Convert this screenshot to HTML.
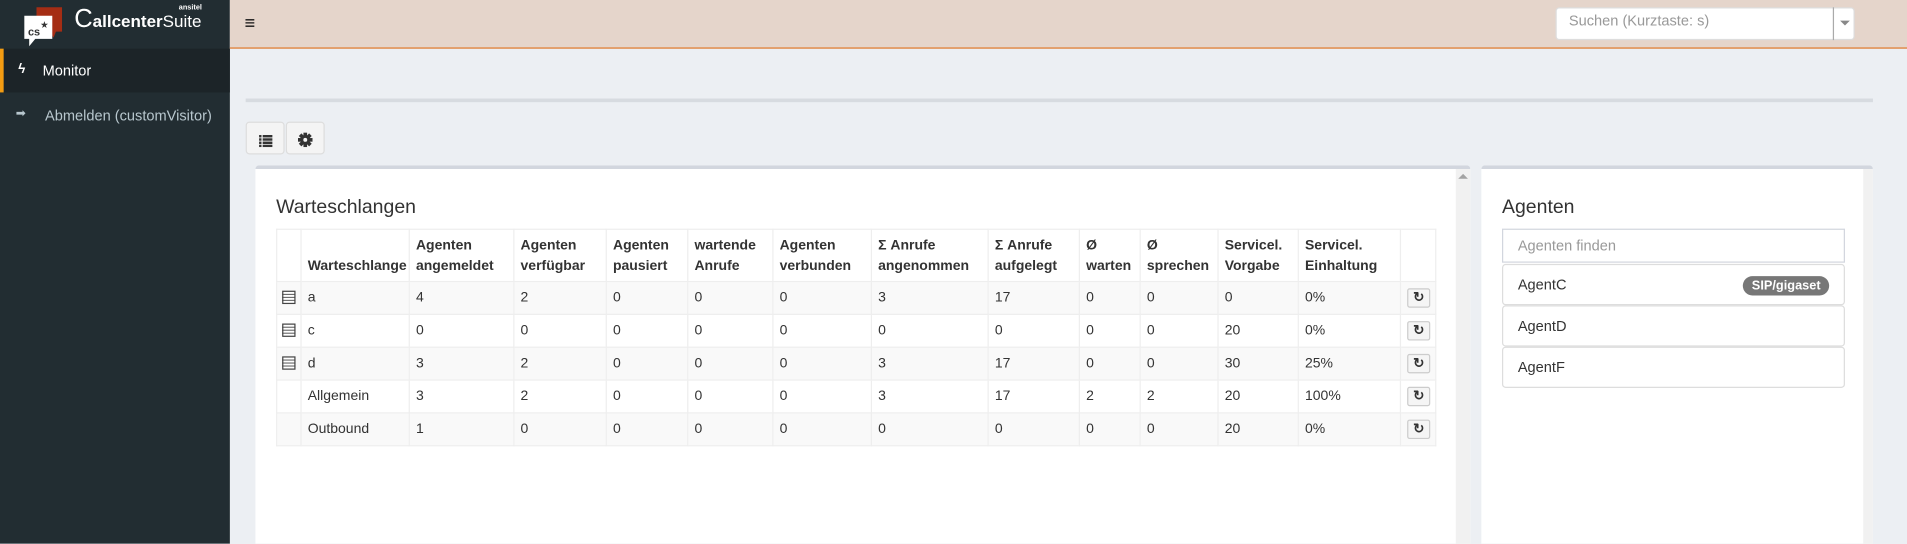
<!DOCTYPE html>
<html><head><meta charset="utf-8">
<style>
*{box-sizing:border-box;margin:0;padding:0}
html,body{width:1907px;height:544px;overflow:hidden;background:#eceff3;font-family:"Liberation Sans",Arial,sans-serif}
#w{position:absolute;left:0;top:0;width:1568px;height:447px;transform:scale(1.2162);transform-origin:0 0;background:#eceff3;color:#333}
.abs{position:absolute}
#side{left:0;top:0;width:189px;height:447px;background:#222d32}
#top{left:189px;top:0;width:1379px;height:40px;background:#e5d5cb;border-bottom:1px solid #e07a2c}
table{border-collapse:collapse;font-size:11.5px;color:#333;table-layout:fixed}
td,th{border:1px solid #eeeeee;padding:0 5px;text-align:left;vertical-align:middle;white-space:nowrap;overflow:hidden}
th{font-weight:bold;line-height:17px;vertical-align:bottom;padding-bottom:3px;height:43px}
td{height:27px}
tr.g td{background:#f9f9f9}
.rb{width:19px;height:16px;border:1px solid #ccc;border-radius:2px;background:#f5f5f5;display:inline-block;vertical-align:middle;text-align:center;font-size:11px;line-height:14px;font-weight:bold}
.qi{display:inline-block;width:11px;height:11px;border:1px solid #444;background:repeating-linear-gradient(#fff 0 1.5px,#555 1.5px 2.5px);vertical-align:middle}
.ag{position:absolute;left:1235px;width:282px;height:34px;border:1px solid #ddd;border-radius:3px;background:#fff;font-size:12px;padding:0 0 0 12px;line-height:33px;color:#333}
</style></head><body><div id="w">
<div id="side" class="abs">
  <svg class="abs" style="left:16px;top:5px" width="40" height="42" viewBox="0 0 40 42">
    <path d="M14 1h21v20l-5 0l-2 5l-3-5h-11z" fill="#a52d14"/>
    <path d="M4 8h23v19h-14l-5 6v-6h-4z" fill="#fff"/>
    <text x="7" y="24" font-size="9" font-family="Liberation Sans" font-weight="bold" fill="#333">cs</text>
    <text x="17" y="18" font-size="8" fill="#333">★</text>
  </svg>
  <div class="abs" style="left:61px;top:5px;color:#fff;white-space:nowrap;line-height:22px"><span style="font-size:21px">C</span><b style="font-size:14px">allcenter</b><span style="font-size:14px">Suite</span></div>
  <div class="abs" style="left:147px;top:4px;font-size:6px;color:#fff;font-weight:bold">ansitel</div>
  <div class="abs" style="left:0;top:40px;width:189px;height:36px;background:#1c2428;border-left:3px solid #f39c12"></div>
  <div class="abs" style="left:15px;top:51px;font-size:11px;color:#fff;font-weight:bold">ϟ</div>
  <div class="abs" style="left:35px;top:51px;font-size:12px;color:#fff">Monitor</div>
  <div class="abs" style="left:13px;top:88px;font-size:10px;color:#b8c7ce">➡</div>
  <div class="abs" style="left:37px;top:88px;font-size:12px;color:#b8c7ce">Abmelden (customVisitor)</div>
</div>
<div id="top" class="abs">
  <div class="abs" style="left:12px;top:12px;font-size:15px;font-weight:bold;color:#111;line-height:15px">≡</div>
  <div class="abs" style="left:1090px;top:6px;width:246px;height:27px;background:#fff;border:1px solid #ddd;border-radius:3px"></div>
  <div class="abs" style="left:1101px;top:10px;font-size:12px;color:#999">Suchen (Kurztaste: s)</div>
  <div class="abs" style="left:1318px;top:6px;width:1px;height:27px;background:#aaa"></div>
  <div class="abs" style="left:1324px;top:17px;width:0;height:0;border-left:4px solid transparent;border-right:4px solid transparent;border-top:4px solid #888"></div>
</div>
<div class="abs" style="left:202px;top:81px;width:1338px;height:3px;background:#d7dbe0"></div>
<div class="abs" style="left:202px;top:100px;width:32px;height:27px;background:#f4f4f4;border:1px solid #ddd;border-radius:3px;text-align:center;padding-top:7px"><svg width="11" height="10" viewBox="0 0 11 10" fill="#333"><rect x="0" y="0" width="2" height="2"/><rect x="3" y="0" width="8" height="2"/><rect x="0" y="2.7" width="2" height="2"/><rect x="3" y="2.7" width="8" height="2"/><rect x="0" y="5.4" width="2" height="2"/><rect x="3" y="5.4" width="8" height="2"/><rect x="0" y="8" width="2" height="2"/><rect x="3" y="8" width="8" height="2"/></svg></div>
<div class="abs" style="left:235px;top:100px;width:32px;height:27px;background:#f4f4f4;border:1px solid #ddd;border-radius:3px;text-align:center;padding-top:7px"><svg width="12" height="12" viewBox="0 0 12 12"><g fill="#333" transform="translate(6 6)"><rect x="-1.5" y="-6" width="3" height="12"/><rect x="-1.5" y="-6" width="3" height="12" transform="rotate(45)"/><rect x="-1.5" y="-6" width="3" height="12" transform="rotate(90)"/><rect x="-1.5" y="-6" width="3" height="12" transform="rotate(135)"/><circle r="4"/></g><circle cx="6" cy="6" r="1.6" fill="#f4f4f4"/></svg></div>

<div class="abs" style="left:210px;top:136px;width:999px;height:311px;background:#fff;border-top:3px solid #d2d6de;border-radius:3px 3px 0 0"></div>
<div class="abs" style="left:1197px;top:139px;width:12px;height:308px;background:#f1f1f1"></div>
<div class="abs" style="left:1199px;top:143px;border-left:4px solid transparent;border-right:4px solid transparent;border-bottom:4px solid #a3a3a3"></div>
<div class="abs" style="left:227px;top:162px;font-size:16px;color:#333">Warteschlangen</div>
<table class="abs" style="left:227px;top:188px;width:954px">
<colgroup><col style="width:20px"><col style="width:89px"><col style="width:86px"><col style="width:76px"><col style="width:67px"><col style="width:70px"><col style="width:81px"><col style="width:96px"><col style="width:75px"><col style="width:50px"><col style="width:64px"><col style="width:66px"><col style="width:84px"><col style="width:29px"></colgroup>
<tr><th></th><th>Warteschlange</th><th>Agenten<br>angemeldet</th><th>Agenten<br>verfügbar</th><th>Agenten<br>pausiert</th><th>wartende<br>Anrufe</th><th>Agenten<br>verbunden</th><th>Σ Anrufe<br>angenommen</th><th>Σ Anrufe<br>aufgelegt</th><th>Ø<br>warten</th><th>Ø<br>sprechen</th><th>Servicel.<br>Vorgabe</th><th>Servicel.<br>Einhaltung</th><th></th></tr>
<tr class="g"><td style="padding:0 4px"><span class="qi"></span></td><td>a</td><td>4</td><td>2</td><td>0</td><td>0</td><td>0</td><td>3</td><td>17</td><td>0</td><td>0</td><td>0</td><td>0%</td><td><span class="rb">↻</span></td></tr>
<tr><td style="padding:0 4px"><span class="qi"></span></td><td>c</td><td>0</td><td>0</td><td>0</td><td>0</td><td>0</td><td>0</td><td>0</td><td>0</td><td>0</td><td>20</td><td>0%</td><td><span class="rb">↻</span></td></tr>
<tr class="g"><td style="padding:0 4px"><span class="qi"></span></td><td>d</td><td>3</td><td>2</td><td>0</td><td>0</td><td>0</td><td>3</td><td>17</td><td>0</td><td>0</td><td>30</td><td>25%</td><td><span class="rb">↻</span></td></tr>
<tr><td></td><td>Allgemein</td><td>3</td><td>2</td><td>0</td><td>0</td><td>0</td><td>3</td><td>17</td><td>2</td><td>2</td><td>20</td><td>100%</td><td><span class="rb">↻</span></td></tr>
<tr class="g"><td></td><td>Outbound</td><td>1</td><td>0</td><td>0</td><td>0</td><td>0</td><td>0</td><td>0</td><td>0</td><td>0</td><td>20</td><td>0%</td><td><span class="rb">↻</span></td></tr>
</table>

<div class="abs" style="left:1218px;top:136px;width:322px;height:311px;background:#fff;border-top:3px solid #d2d6de;border-radius:3px 3px 0 0"></div>
<div class="abs" style="left:1532px;top:139px;width:8px;height:308px;background:#f1f1f1"></div>
<div class="abs" style="left:1235px;top:162px;font-size:16px;color:#333">Agenten</div>
<div class="abs" style="left:1235px;top:188px;width:282px;height:28px;border:1px solid #d2d6de;background:#fff;font-size:12px;color:#999;padding-left:12px;line-height:27px">Agenten finden</div>
<div class="ag" style="top:217px">AgentC<span style="position:absolute;right:12px;top:9px;height:16px;line-height:16px;padding:0 7px;border-radius:8px;background:#777;color:#fff;font-weight:bold;font-size:10.5px">SIP/gigaset</span></div>
<div class="ag" style="top:251px">AgentD</div>
<div class="ag" style="top:285px">AgentF</div>
</div></body></html>
